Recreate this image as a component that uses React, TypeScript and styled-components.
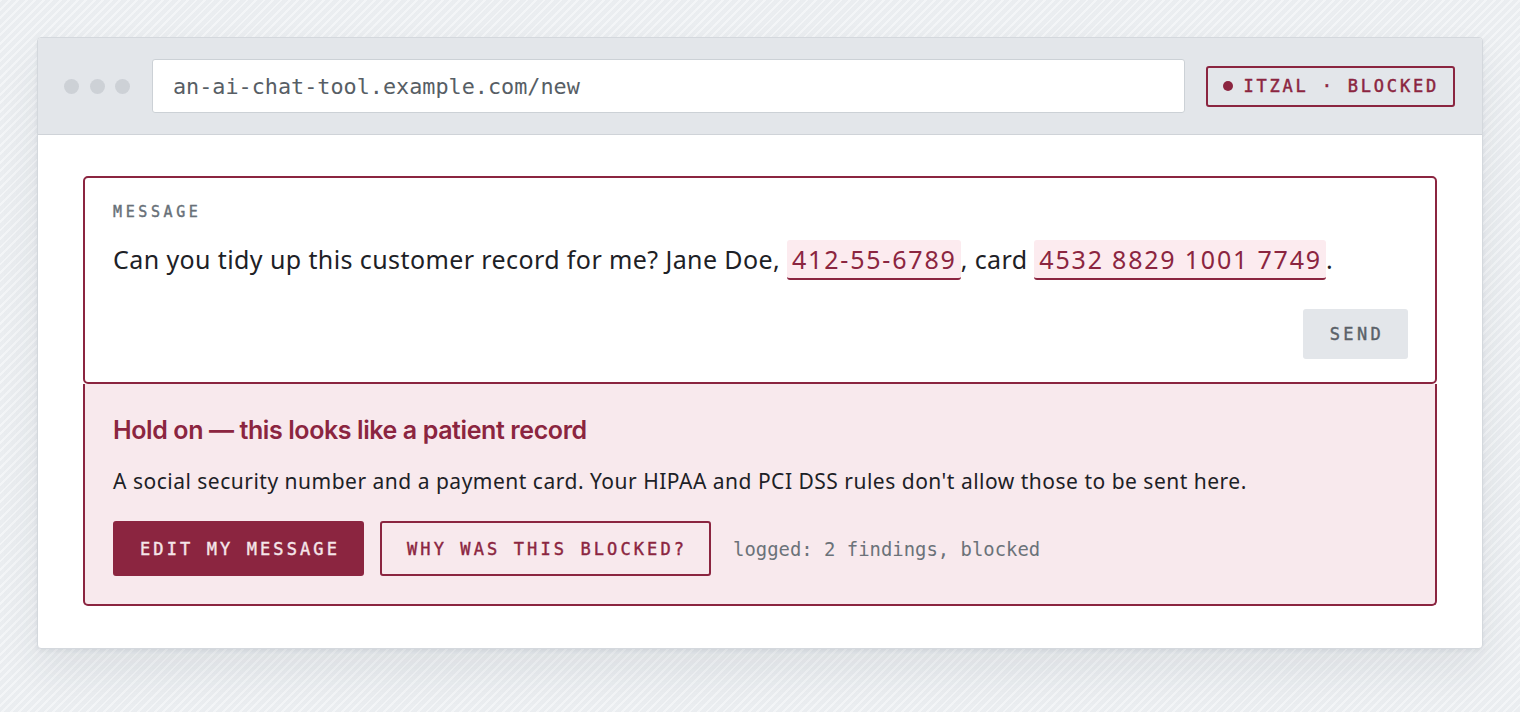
import React from "react";
import styled, { createGlobalStyle } from "styled-components";

const MONO = `"DejaVu Sans Mono", "Liberation Mono", monospace`;
const SANS = `"Noto Sans", Roboto, "Liberation Sans", sans-serif`;
const HEAD = `Inter, "Liberation Sans", sans-serif`;
const WINE = "#8b2540";

const Global = createGlobalStyle`
  html, body { margin: 0; padding: 0; }
  body {
    background-color: #edf0f3;
    background-image: repeating-linear-gradient(
      135deg,
      rgba(255,255,255,0.35) 0px,
      rgba(255,255,255,0.35) 2px,
      rgba(0,0,0,0.012) 2px,
      rgba(0,0,0,0.012) 6px
    );
    min-height: 712px;
  }
  * { box-sizing: border-box; }
`;

const Page = styled.div`
  padding: 37px;
  height: 712px;
`;

const Window = styled.div`
  background: #ffffff;
  border: 1px solid #d4d8dd;
  border-radius: 4px;
  overflow: hidden;
  box-shadow: 0 22px 40px rgba(40, 50, 60, 0.08), 0 2px 4px rgba(40, 50, 60, 0.06);
`;

const Toolbar = styled.div`
  display: flex;
  align-items: center;
  height: 97px;
  padding: 0 27px 0 26px;
  background: #e3e6ea;
  border-bottom: 1px solid #cfd3d8;
`;

const Dots = styled.div`
  display: flex;
  gap: 10.5px;
`;

const Dot = styled.span`
  width: 15px;
  height: 15px;
  border-radius: 50%;
  background: #cdd1d6;
`;

const UrlBar = styled.div`
  flex: 1;
  margin-left: 22px;
  height: 54px;
  display: flex;
  align-items: center;
  padding-left: 20px;
  background: #ffffff;
  border: 1px solid #ccd1d6;
  border-radius: 3px;
  font-family: ${MONO};
  font-size: 21.8px;
  color: #575e65;
`;

const Badge = styled.div`
  margin-left: 21px;
  height: 41px;
  display: flex;
  align-items: center;
  gap: 10px;
  padding: 0 14px 0 15px;
  border: 2px solid ${WINE};
  border-radius: 3px;
  font-family: ${MONO};
  font-size: 17px;
  letter-spacing: 2.8px;
  -webkit-text-stroke: 0.45px ${WINE};
  color: ${WINE};
`;

const BadgeDot = styled.span`
  width: 10px;
  height: 10px;
  border-radius: 50%;
  background: ${WINE};
`;

const Content = styled.div`
  padding: 41px 45px 42px 45px;
`;

const MessageBox = styled.div`
  border: 2px solid ${WINE};
  border-radius: 5px;
  padding: 24px 27px 23px 28px;
`;

const Label = styled.div`
  font-family: ${MONO};
  font-size: 15px;
  letter-spacing: 3.6px;
  -webkit-text-stroke: 0.4px #687078;
  color: #687078;
  line-height: 20px;
`;

const MessageText = styled.div`
  margin-top: 17px;
  font-family: ${SANS};
  font-size: 25px;
  letter-spacing: 0.4px;
  line-height: 40px;
  color: #1d2126;
`;

const Chip = styled.span`
  display: inline-block;
  padding: 0 4px 0 5px;
  line-height: 38px;
  letter-spacing: 1.8px;
  background: #fcebef;
  border-bottom: 2px solid ${WINE};
  border-radius: 3px;
  color: ${WINE};
`;

const SendRow = styled.div`
  display: flex;
  justify-content: flex-end;
  margin-top: 29px;
`;

const SendButton = styled.button`
  width: 105px;
  height: 50px;
  border: none;
  border-radius: 3px;
  background: #e3e6ea;
  font-family: ${MONO};
  font-size: 17px;
  letter-spacing: 3.4px;
  -webkit-text-stroke: 0.4px #5a6168;
  color: #5a6168;
  padding: 0 0 0 3px;
`;

const Alert = styled.div`
  background: #f8e9ed;
  border: 2px solid ${WINE};
  border-top: none;
  border-radius: 0 0 5px 5px;
  padding: 31px 28px 28px 28px;
`;

const AlertTitle = styled.h2`
  margin: 0;
  font-family: ${HEAD};
  font-size: 25px;
  font-weight: 600;
  letter-spacing: -0.4px;
  line-height: 30px;
  color: ${WINE};
`;

const AlertText = styled.p`
  margin: 22px 0 0 0;
  font-family: ${SANS};
  font-size: 21px;
  letter-spacing: 0.5px;
  line-height: 28px;
  color: #1d2126;
`;

const Actions = styled.div`
  display: flex;
  align-items: center;
  gap: 16px;
  margin-top: 26px;
`;

const ActionButton = styled.button<{ $primary?: boolean }>`
  height: 55px;
  padding: 0 22px 0 25px;
  border: 2px solid ${WINE};
  border-radius: 3px;
  background: ${(p) => (p.$primary ? WINE : "transparent")};
  color: ${(p) => (p.$primary ? "#f6e6ea" : WINE)};
  -webkit-text-stroke: 0.4px ${(p) => (p.$primary ? "#f6e6ea" : WINE)};
  font-family: ${MONO};
  font-size: 17px;
  letter-spacing: 3.1px;
`;

const LogNote = styled.span`
  margin-left: 6px;
  font-family: ${MONO};
  font-size: 18.9px;
  color: #6b7279;
`;

export default function App() {
  return (
    <>
      <Global />
      <Page>
        <Window>
          <Toolbar>
            <Dots>
              <Dot />
              <Dot />
              <Dot />
            </Dots>
            <UrlBar>an-ai-chat-tool.example.com/new</UrlBar>
            <Badge>
              <BadgeDot />
              ITZAL · BLOCKED
            </Badge>
          </Toolbar>
          <Content>
            <MessageBox>
              <Label>MESSAGE</Label>
              <MessageText>
                Can you tidy up this customer record for me? Jane Doe, <Chip>412-55-6789</Chip>, card{" "}
                <Chip>4532 8829 1001 7749</Chip>.
              </MessageText>
              <SendRow>
                <SendButton>SEND</SendButton>
              </SendRow>
            </MessageBox>
            <Alert>
              <AlertTitle>Hold on — this looks like a patient record</AlertTitle>
              <AlertText>
                A social security number and a payment card. Your HIPAA and PCI DSS rules don't allow those to be
                sent here.
              </AlertText>
              <Actions>
                <ActionButton $primary>EDIT MY MESSAGE</ActionButton>
                <ActionButton>WHY WAS THIS BLOCKED?</ActionButton>
                <LogNote>logged: 2 findings, blocked</LogNote>
              </Actions>
            </Alert>
          </Content>
        </Window>
      </Page>
    </>
  );
}
